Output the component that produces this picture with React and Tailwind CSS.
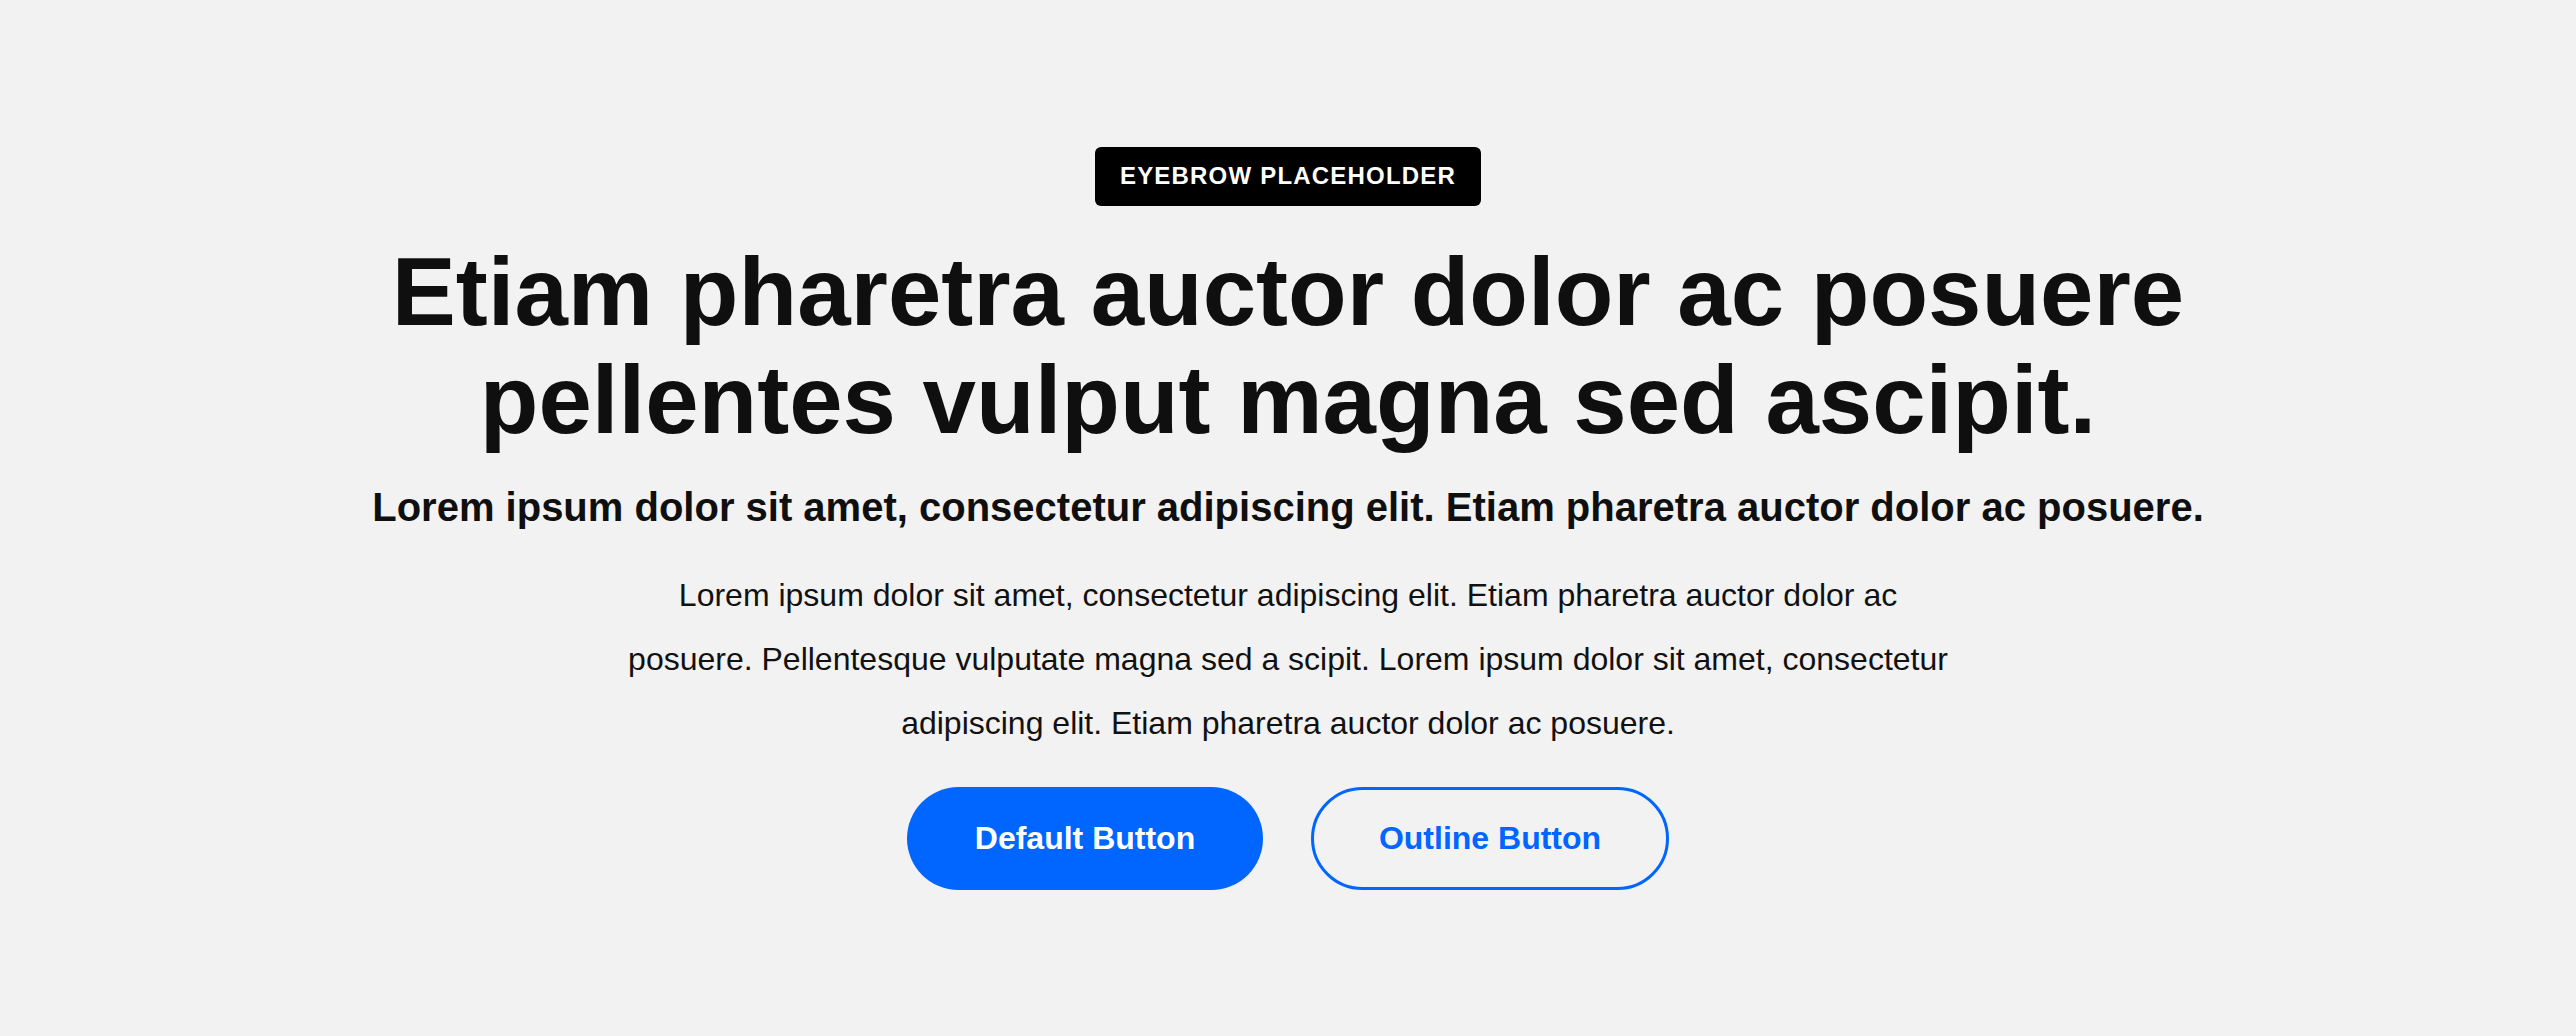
export default function App() {
  return (
    <div
      className="min-h-screen w-full bg-[#f2f2f2] flex items-center justify-center"
      style={{ fontFamily: '"Liberation Sans", Arial, sans-serif' }}
    >
      <div className="flex flex-col items-center text-center">
        <span className="bg-black text-white rounded-[6px] px-[25px] h-[59px] flex items-center text-[24px] font-bold tracking-[0.05em] leading-none">
          EYEBROW PLACEHOLDER
        </span>
        <h1 className="mt-8 max-w-[1840px] text-[96px] leading-[108px] font-bold text-[#0f0f0f]">
          Etiam pharetra auctor dolor ac posuere pellentes vulput magna sed ascipit.
        </h1>
        <h2 className="mt-[29px] text-[40px] leading-[48px] font-bold text-[#0f0f0f]">
          Lorem ipsum dolor sit amet, consectetur adipiscing elit. Etiam pharetra auctor dolor ac posuere.
        </h2>
        <p className="mt-8 max-w-[1330px] text-[32px] leading-[64px] text-[#111111]">
          Lorem ipsum dolor sit amet, consectetur adipiscing elit. Etiam pharetra auctor dolor ac posuere. Pellentesque vulputate magna sed a scipit. Lorem ipsum dolor sit amet, consectetur adipiscing elit. Etiam pharetra auctor dolor ac posuere.
        </p>
        <div className="mt-8 flex items-center gap-12">
          <button className="h-[103px] w-[356px] rounded-full bg-[#0066ff] text-white text-[32px] font-bold">
            Default Button
          </button>
          <button className="h-[103px] w-[358px] rounded-full border-[3px] border-[#0066ff] text-[#0066ff] text-[32px] font-bold bg-transparent">
            Outline Button
          </button>
        </div>
      </div>
    </div>
  );
}
